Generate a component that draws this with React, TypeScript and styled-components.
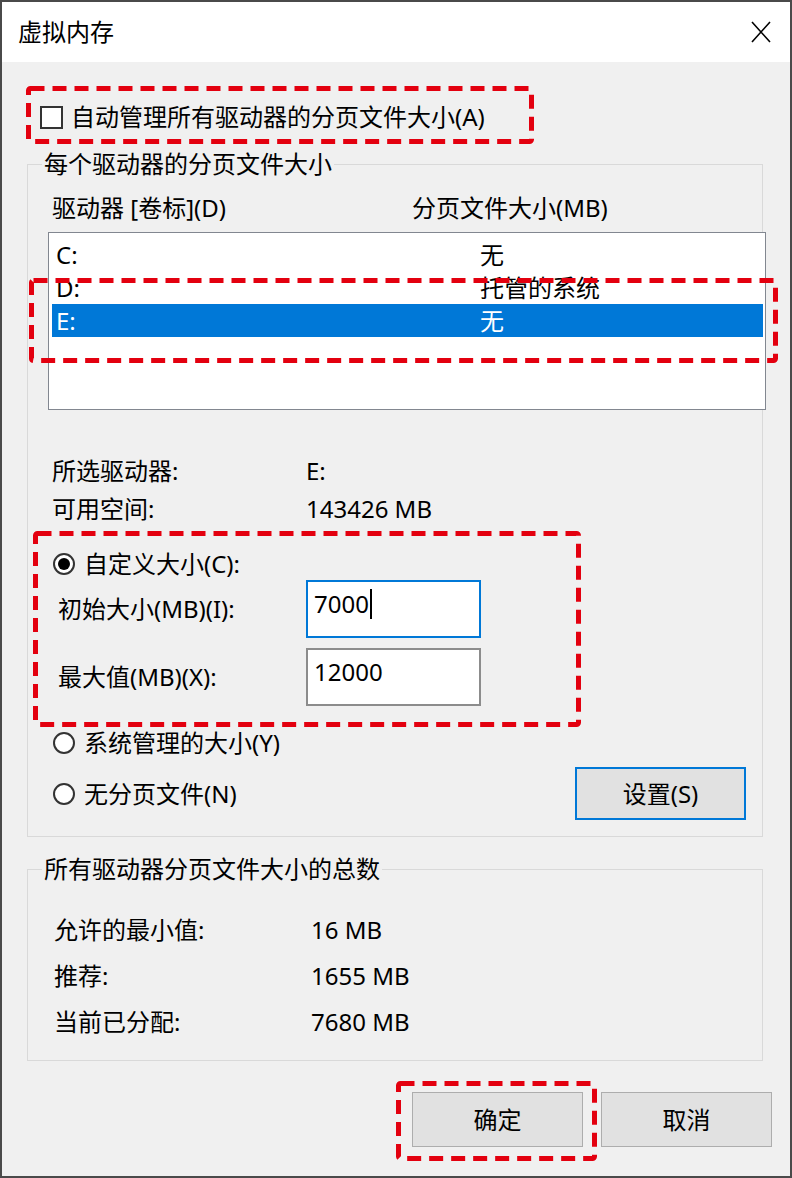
import React from "react";
import styled, { createGlobalStyle } from "styled-components";

const GlobalStyle = createGlobalStyle`
  html, body { margin: 0; padding: 0; }
  body {
    font-family: "Noto Sans", "Noto Sans CJK SC", sans-serif;
    font-size: 24px;
    line-height: 28px;
    color: #000;
    background: #f0f0f0;
  }
  * { box-sizing: border-box; }
`;

const Window = styled.div`
  position: relative;
  width: 792px;
  height: 1178px;
  border: 2px solid #4a4a4a;
  display: flex;
  flex-direction: column;
  background: #f0f0f0;
  overflow: hidden;
`;

const TitleBar = styled.div`
  height: 60px;
  flex: none;
  background: #ffffff;
  display: flex;
  align-items: center;
  justify-content: space-between;
  padding: 0 18px 0 16px;
`;

const Title = styled.span`
  font-size: 24px;
  line-height: 28px;
`;

const CloseIcon = styled.svg`
  width: 22px;
  height: 22px;
  display: block;
`;

const Body = styled.div`
  flex: 1;
  display: flex;
  flex-direction: column;
  padding: 41px 27px 0 25px;
`;

const CheckRow = styled.label`
  display: flex;
  align-items: center;
  gap: 8px;
  height: 28px;
  margin-left: 13px;
`;

const CheckBox = styled.span`
  width: 23px;
  height: 23px;
  border: 2px solid #333333;
  background: #ffffff;
  flex: none;
`;

const GroupBox = styled.fieldset<{ $top: number; $bottom: number }>`
  margin: ${(p) => p.$top}px 0 0 0;
  padding: 0 0 ${(p) => p.$bottom}px 0;
  border: 1px solid #d9d9d9;
  min-width: 0;
  display: flex;
  flex-direction: column;
`;

const Legend = styled.legend`
  margin-left: 14px;
  padding: 0 2px;
  line-height: 28px;
  font-size: 24px;
`;

const HeaderRow = styled.div`
  margin-top: 16px;
  padding-left: 24px;
  display: grid;
  grid-template-columns: 360px 1fr;
  height: 28px;
`;

const ListBox = styled.div`
  margin: 10px -4px 0 20px;
  height: 178px;
  border: 1px solid #828790;
  background: #ffffff;
  padding: 5px 2px 0 3px;
  display: flex;
  flex-direction: column;
`;

const ListRow = styled.div<{ $selected?: boolean }>`
  height: 33px;
  display: grid;
  grid-template-columns: 424px 1fr;
  align-items: center;
  padding-left: 4px;
  background: ${(p) => (p.$selected ? "#0078d7" : "transparent")};
  color: ${(p) => (p.$selected ? "#ffffff" : "#000000")};
`;

const InfoGrid = styled.div<{ $top: number; $left: number; $col: number; $gap: number }>`
  margin-top: ${(p) => p.$top}px;
  padding-left: ${(p) => p.$left}px;
  display: grid;
  grid-template-columns: ${(p) => p.$col}px 1fr;
  grid-auto-rows: 28px;
  row-gap: ${(p) => p.$gap}px;
`;

const RadioRow = styled.label<{ $top: number }>`
  margin-top: ${(p) => p.$top}px;
  padding-left: 25px;
  display: flex;
  align-items: center;
  gap: 9px;
  height: 28px;
`;

const Radio = styled.span<{ $checked?: boolean }>`
  width: 22px;
  height: 22px;
  border-radius: 50%;
  border: 2px solid #333333;
  background: #ffffff;
  display: flex;
  align-items: center;
  justify-content: center;
  flex: none;
  &::after {
    content: "";
    width: 12px;
    height: 12px;
    border-radius: 50%;
    background: ${(p) => (p.$checked ? "#000000" : "transparent")};
  }
`;

const FieldRow = styled.div<{ $top: number }>`
  margin-top: ${(p) => p.$top}px;
  padding-left: 30px;
  display: grid;
  grid-template-columns: 248px 175px;
  align-items: center;
  height: 58px;
`;

const TextField = styled.div<{ $focused?: boolean }>`
  height: 58px;
  width: 175px;
  background: #ffffff;
  border: 2px solid ${(p) => (p.$focused ? "#0078d7" : "#8c8c8c")};
  padding: 8px 0 0 6px;
  display: flex;
  align-items: flex-start;
`;

const Caret = styled.span`
  display: inline-block;
  width: 2px;
  height: 30px;
  margin-top: -1px;
  margin-left: 1px;
  background: #000000;
`;

const BottomRow = styled.div`
  margin-top: 10px;
  display: flex;
  justify-content: space-between;
  align-items: center;
  padding-left: 25px;
  padding-right: 16px;
  height: 53px;
`;

const InlineRadio = styled.label`
  display: flex;
  align-items: center;
  gap: 9px;
`;

const Button = styled.button<{ $default?: boolean; $w: number; $h: number }>`
  width: ${(p) => p.$w}px;
  height: ${(p) => p.$h}px;
  font-family: inherit;
  font-size: 24px;
  line-height: 28px;
  color: #000;
  background: #e1e1e1;
  border: ${(p) => (p.$default ? "2px solid #0078d7" : "1px solid #adadad")};
  padding: 0;
  display: flex;
  align-items: center;
  justify-content: center;
`;

const Footer = styled.div`
  margin: 31px -9px 0 0;
  display: flex;
  justify-content: flex-end;
  gap: 18px;
`;

const Annotation = styled.svg`
  position: absolute;
  pointer-events: none;
  overflow: visible;
`;

type Box = { x: number; y: number; w: number; h: number };

const marks: Box[] = [
  { x: 26, y: 86, w: 508, h: 58 },
  { x: 29, y: 278, w: 749, h: 85 },
  { x: 33, y: 531, w: 548, h: 196 },
  { x: 396, y: 1081, w: 201, h: 80 },
];

function Mark({ x, y, w, h }: Box) {
  return (
    <Annotation
      width={w}
      height={h}
      viewBox={`0 0 ${w} ${h}`}
      style={{ left: x - 2, top: y - 2 }}
    >
      <rect
        x={2.5}
        y={2.5}
        width={w - 5}
        height={h - 5}
        rx={2}
        fill="none"
        stroke="#e3000f"
        strokeWidth={5}
        strokeDasharray="14 8"
      />
    </Annotation>
  );
}

const drives = [
  { name: "C:", size: "无" },
  { name: "D:", size: "托管的系统" },
  { name: "E:", size: "无", selected: true },
];

export default function App() {
  return (
    <>
      <GlobalStyle />
      <Window>
        <TitleBar>
          <Title>虚拟内存</Title>
          <CloseIcon viewBox="0 0 22 22">
            <path d="M2 1 L20 21 M20 1 L2 21" stroke="#000" strokeWidth="1.6" fill="none" />
          </CloseIcon>
        </TitleBar>
        <Body>
          <CheckRow>
            <CheckBox />
            <span>自动管理所有驱动器的分页文件大小(A)</span>
          </CheckRow>

          <GroupBox $top={19} $bottom={16}>
            <Legend>每个驱动器的分页文件大小</Legend>
            <HeaderRow>
              <span>驱动器 [卷标](D)</span>
              <span>分页文件大小(MB)</span>
            </HeaderRow>
            <ListBox>
              {drives.map((d) => (
                <ListRow key={d.name} $selected={d.selected}>
                  <span>{d.name}</span>
                  <span>{d.size}</span>
                </ListRow>
              ))}
            </ListBox>
            <InfoGrid $top={47} $left={24} $col={254} $gap={10}>
              <span>所选驱动器:</span>
              <span>E:</span>
              <span>可用空间:</span>
              <span>143426 MB</span>
            </InfoGrid>
            <RadioRow $top={27}>
              <Radio $checked />
              <span>自定义大小(C):</span>
            </RadioRow>
            <FieldRow $top={2}>
              <span>初始大小(MB)(I):</span>
              <TextField $focused>
                <span>7000</span>
                <Caret />
              </TextField>
            </FieldRow>
            <FieldRow $top={10}>
              <span>最大值(MB)(X):</span>
              <TextField>
                <span>12000</span>
              </TextField>
            </FieldRow>
            <RadioRow $top={23}>
              <Radio />
              <span>系统管理的大小(Y)</span>
            </RadioRow>
            <BottomRow>
              <InlineRadio>
                <Radio />
                <span>无分页文件(N)</span>
              </InlineRadio>
              <Button $default $w={171} $h={53}>设置(S)</Button>
            </BottomRow>
          </GroupBox>

          <GroupBox $top={18} $bottom={24}>
            <Legend>所有驱动器分页文件大小的总数</Legend>
            <InfoGrid $top={33} $left={26} $col={257} $gap={18}>
              <span>允许的最小值:</span>
              <span>16 MB</span>
              <span>推荐:</span>
              <span>1655 MB</span>
              <span>当前已分配:</span>
              <span>7680 MB</span>
            </InfoGrid>
          </GroupBox>

          <Footer>
            <Button $w={171} $h={55}>确定</Button>
            <Button $w={171} $h={55}>取消</Button>
          </Footer>
        </Body>
        {marks.map((m, i) => (
          <Mark key={i} {...m} />
        ))}
      </Window>
    </>
  );
}
